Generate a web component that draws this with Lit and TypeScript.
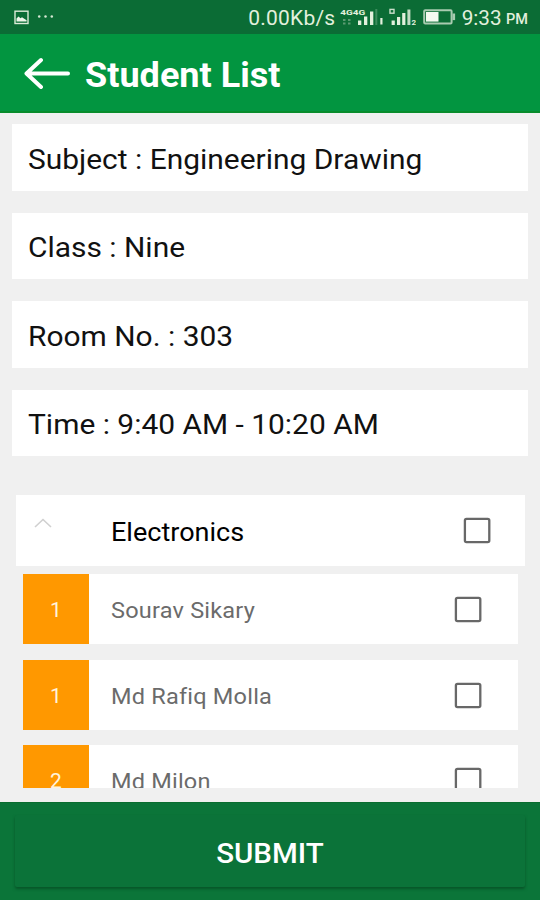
import { LitElement, html, css } from "lit";
import { customElement, property } from "lit/decorators.js";

@customElement("check-box")
class CheckBox extends LitElement {
  static styles = css`
    :host { display: block; width: 28px; height: 27px; flex: none; margin-top: 1px; }
    svg { display: block; }
  `;
  render() {
    return html`<svg width="28" height="27" viewBox="0 0 28 27">
      <rect x="1.9" y="1.8" width="24.4" height="23.4" rx="1.6" fill="none" stroke="#686868" stroke-width="2.3" />
    </svg>`;
  }
}

@customElement("student-row")
class StudentRow extends LitElement {
  @property() roll = "";
  @property() name = "";
  static styles = css`
    :host { display: flex; align-items: center; height: 70.4px; flex: none; background: #fff; box-sizing: border-box; padding-right: 36px; }
    .roll { width: 66px; height: 100%; display: flex; align-items: center; justify-content: center; background: #ff9800; color: #fff3dc; font-size: 21px; padding-top: 2px; box-sizing: border-box; }
    .name { flex: 1; padding: 2px 0 0 22px; font-size: 22.5px; letter-spacing: 0.2px; color: #6b6b6b; white-space: nowrap; }
    .name span { display: inline-block; transform: scaleX(1.045); transform-origin: left; }
  `;
  render() {
    return html`<div class="roll">${this.roll}</div>
      <div class="name"><span>${this.name}</span></div>
      <check-box></check-box>`;
  }
}

@customElement("status-bar")
class StatusBar extends LitElement {
  static styles = css`
    :host { display: flex; align-items: center; height: 34px; flex: none; box-sizing: border-box; padding: 0 12px 0 14px; background: #0b6c35; color: #e3f0dd; font-size: 19px; white-space: nowrap; }
    svg { display: block; flex: none; }
    .dots { margin-left: 8px; }
    .rate { margin-left: auto; font-size: 19.6px; letter-spacing: 0.2px; padding-top: 2px; transform: scaleX(1.07); transform-origin: right; }
    .sim1 { margin-left: 5px; }
    .sim2 { margin-left: 4px; }
    .battery { margin-left: 7px; }
    .clock { margin-left: 5.5px; font-size: 20.7px; padding-top: 2px; }
    .half { font-size: 14.5px; font-weight: 500; margin-left: 4.5px; padding-top: 5px; }
    .tag { font: 700 8px Roboto, sans-serif; }
  `;
  render() {
    return html`
      <svg width="15" height="15" viewBox="0 0 15 15">
        <rect x="1" y="1.2" width="13" height="12.3" fill="none" stroke="#dcebd8" stroke-width="1.4" />
        <path d="M2.5 11.5V8.6l2-2 2 1.7 1.5-1 4.6 3v1.2z" fill="#eef6ea" />
      </svg>
      <svg class="dots" width="18" height="6" viewBox="0 0 18 6">
        <circle cx="2.2" cy="2.6" r="1.25" fill="#d5e7d2" /><circle cx="8.5" cy="2.6" r="1.25" fill="#d5e7d2" /><circle cx="14.8" cy="2.6" r="1.25" fill="#d5e7d2" />
      </svg>
      <span class="rate">0.00Kb/s</span>
      <svg class="sim1" width="45" height="24" viewBox="0 0 45 24" fill="#e3f0dd">
        <text class="tag" x="0.3" y="10.2" textLength="25" lengthAdjust="spacingAndGlyphs">4G4G</text>
        <g fill="#5c9a72"><rect x="3" y="14" width="2.5" height="2" /><rect x="3" y="17.5" width="2.5" height="2" /><rect x="8" y="14" width="2.5" height="2" /><rect x="8" y="17.5" width="2.5" height="2" /></g>
        <rect x="18" y="15.5" width="3.3" height="4.5" /><rect x="24" y="11.5" width="3.3" height="8.5" /><rect x="30" y="6.5" width="3.3" height="13.5" />
        <rect x="35.3" y="4" width="2" height="16" fill="#3d8c5d" /><rect x="40.3" y="13" width="2.2" height="6.5" />
      </svg>
      <svg class="sim2" width="27" height="24" viewBox="0 0 27 24" fill="#e3f0dd">
        <rect x="1" y="4.4" width="4" height="3.8" fill="none" stroke="#c9dfca" stroke-width="1.4" />
        <rect x="2.6" y="15.5" width="3.2" height="4.5" /><rect x="8" y="12" width="3.2" height="8" /><rect x="13.2" y="8" width="3.2" height="12" /><rect x="18.4" y="4.5" width="3" height="15.5" opacity=".85" />
        <text class="tag" x="22.5" y="20">2</text>
      </svg>
      <svg class="battery" width="33" height="16" viewBox="0 0 33 16">
        <rect x="1.2" y="1.2" width="27.4" height="13.2" rx="1" fill="none" stroke="#a9cbb0" stroke-width="2" />
        <rect x="3" y="3" width="12.5" height="9.6" fill="#f4faf0" /><rect x="29.5" y="4.5" width="2.6" height="6.6" fill="#a9cbb0" />
      </svg>
      <span class="clock">9:33</span><span class="half">PM</span>`;
  }
}

@customElement("app-root")
class AppRoot extends LitElement {
  static styles = css`
    :host { display: flex; flex-direction: column; width: 540px; height: 900px; overflow: hidden; background: #f0f0f0; font-family: Roboto, sans-serif; }
    .appbar { display: flex; align-items: center; height: 79px; flex: none; box-sizing: border-box; padding: 0 24px; background: #029540; border-bottom: 2px solid #078c2c; color: #fff; }
    .back { display: block; }
    h1 { margin: 4px 0 0 15px; font-size: 34.5px; font-weight: 700; white-space: nowrap; transform: scaleX(1.045); transform-origin: left; }
    .info { display: flex; flex-direction: column; gap: 22.2px; padding: 11.3px 12px 0 12.3px; flex: none; }
    .card { height: 66.3px; display: flex; align-items: center; padding: 3.6px 0 0 15.8px; box-sizing: border-box; background: #fff; color: #111; font-size: 28.5px; white-space: nowrap; }
    .card span { transform: scaleX(1.05); transform-origin: left; }
    .group { display: flex; align-items: center; height: 71px; flex: none; margin: 38.7px 15px 0 16px; padding: 0 34px 0 18px; box-sizing: border-box; background: #fff; }
    .chevron { margin-bottom: 14px; }
    .title { flex: 1; padding: 3px 0 0 59px; font-size: 25.5px; color: #000; }
    .title span { display: inline-block; transform: scaleX(1.06); transform-origin: left; }
    .list { display: flex; flex-direction: column; gap: 15.4px; height: 214px; overflow: hidden; margin: 8px 22px 0 23px; flex: none; }
    .footer { margin-top: auto; height: 98px; flex: none; box-sizing: border-box; padding: 12px 15px 13px; background: #0b7539; border-top: 1px solid #0a6d2f; }
    .submit { display: flex; align-items: center; justify-content: center; width: 100%; height: 100%; padding: 4px 0 0; border: 0; border-radius: 2px; background: #0b7339; box-shadow: 0 2px 3px #075528; color: #fff; font: 500 28.5px Roboto, sans-serif; }
    .submit span { transform: scaleX(1.035); }
  `;
  info = ["Subject : Engineering Drawing", "Class : Nine", "Room No. : 303", "Time : 9:40 AM - 10:20 AM"];
  students = [["1", "Sourav Sikary"], ["1", "Md Rafiq Molla"], ["2", "Md Milon"]];
  render() {
    return html`
      <status-bar></status-bar>
      <header class="appbar">
        <svg class="back" width="46" height="32" viewBox="0 0 46 32" fill="none" stroke="#fff" stroke-width="4" stroke-linecap="round" stroke-linejoin="round"><path d="M17 3L2.5 16.5 17 30M3 16.5H44" /></svg>
        <h1>Student List</h1>
      </header>
      <section class="info">${this.info.map((t) => html`<div class="card"><span>${t}</span></div>`)}</section>
      <div class="group">
        <svg class="chevron" width="18" height="10" viewBox="0 0 18 10"><path d="M1 9L9 1.5 17 9" fill="none" stroke="#d0d0d0" stroke-width="1.6" /></svg>
        <div class="title"><span>Electronics</span></div>
        <check-box></check-box>
      </div>
      <section class="list">${this.students.map(([r, n]) => html`<student-row .roll=${r} .name=${n}></student-row>`)}</section>
      <footer class="footer"><button class="submit"><span>SUBMIT</span></button></footer>`;
  }
}
